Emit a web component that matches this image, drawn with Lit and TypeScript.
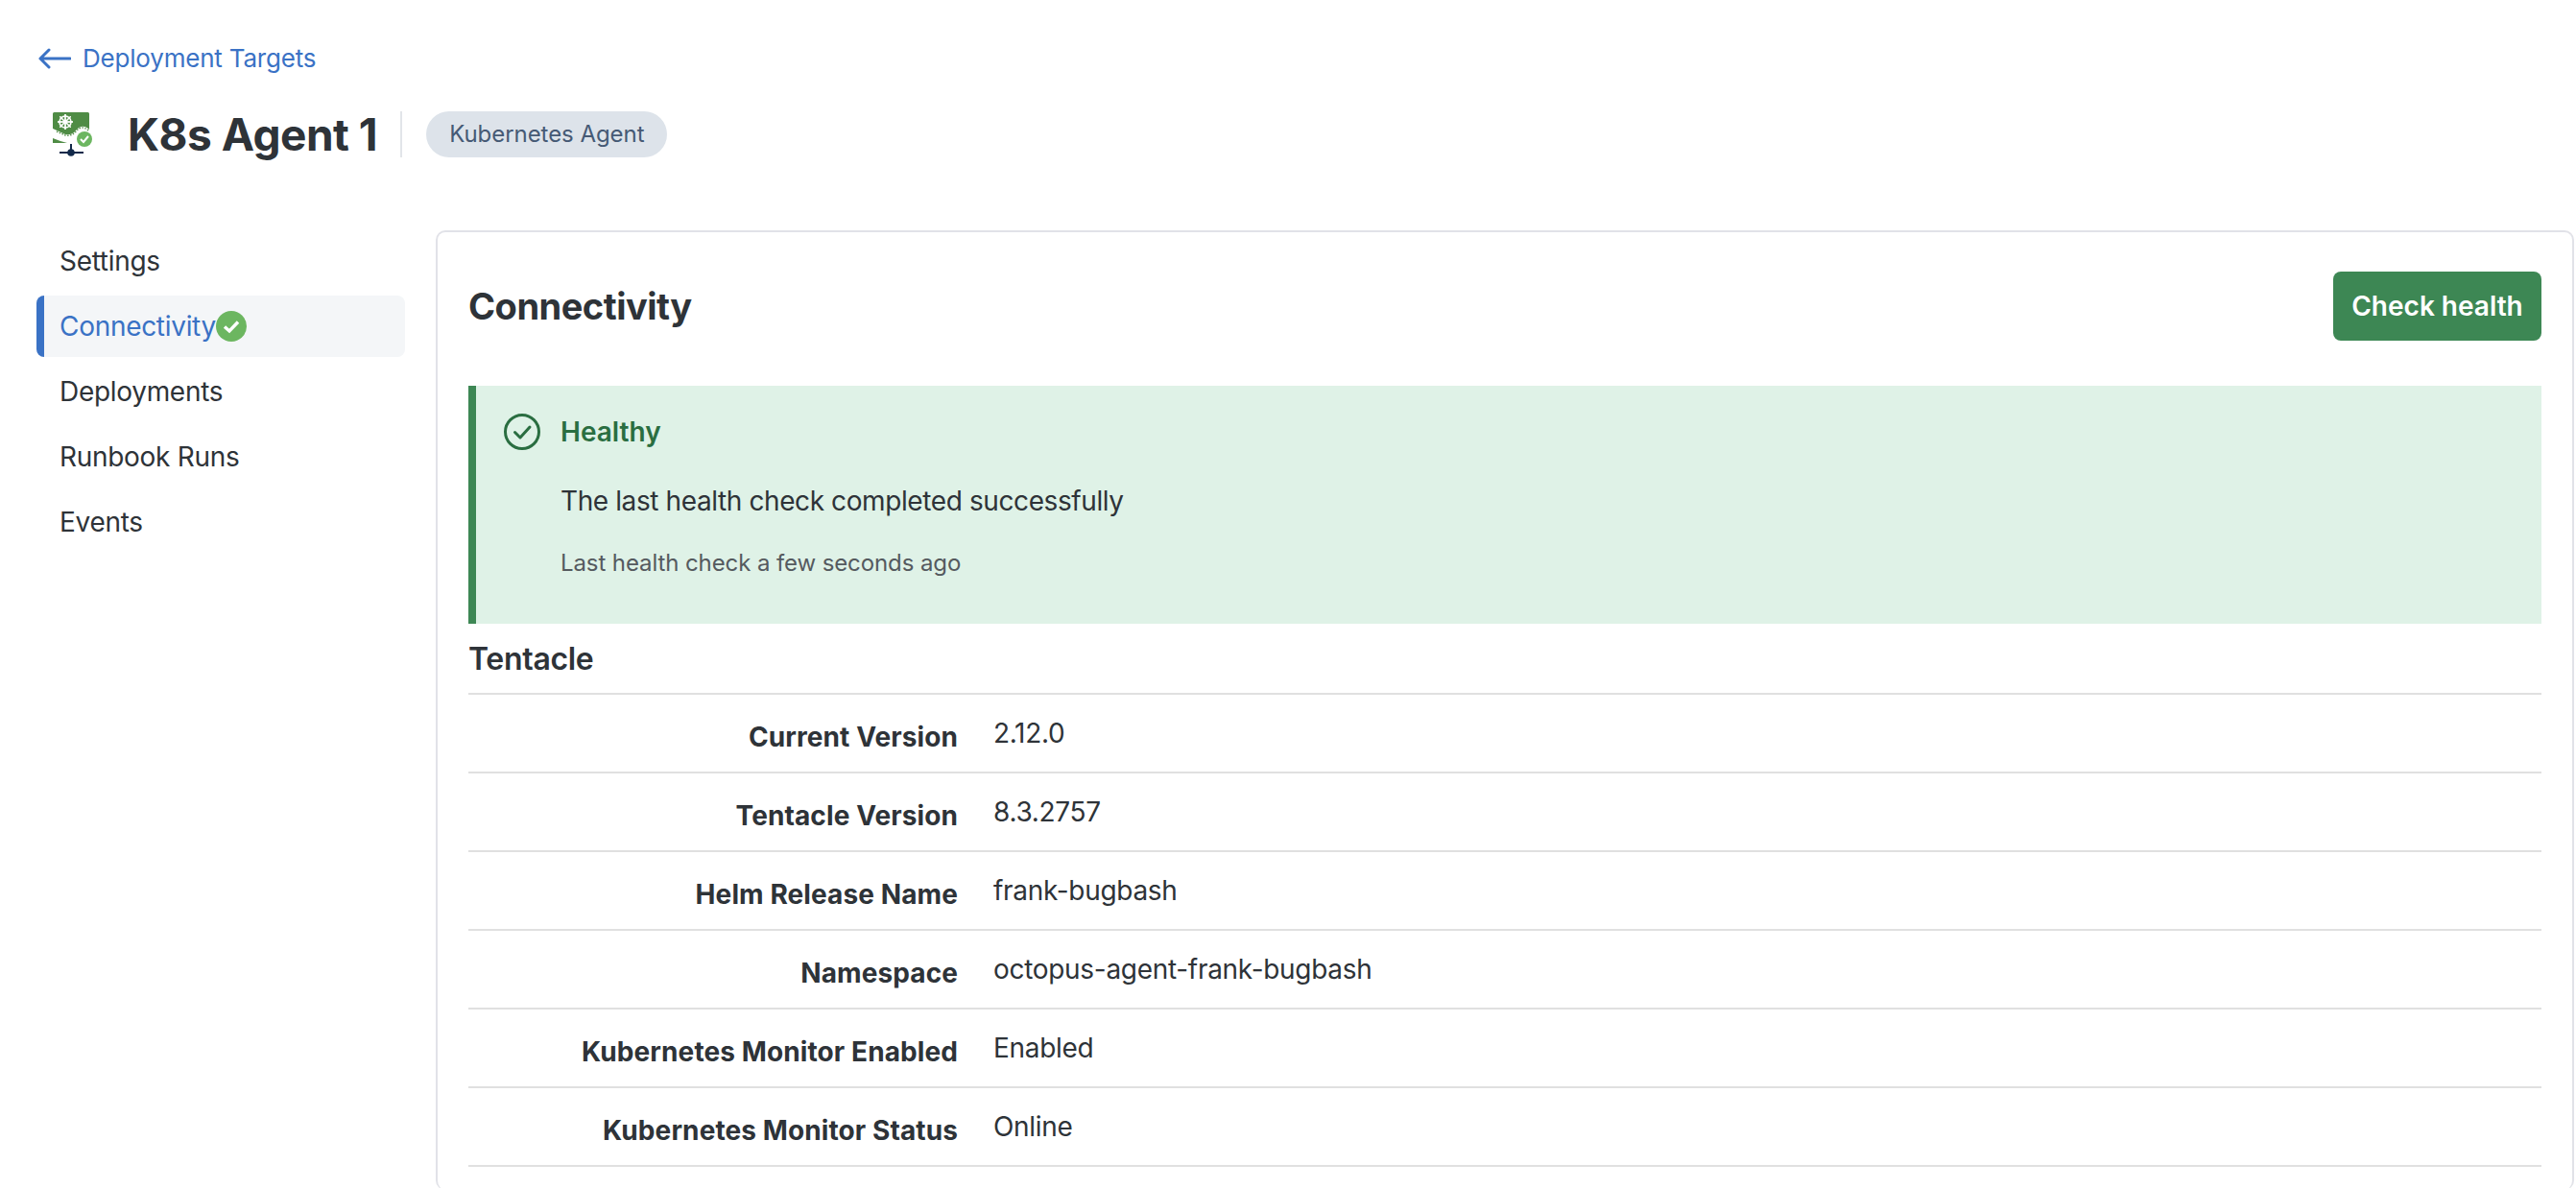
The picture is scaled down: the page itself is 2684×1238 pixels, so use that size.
import { LitElement, html, css, svg } from "lit";
import { customElement } from "lit/decorators.js";

const rows: [string, string][] = [
  ["Current Version", "2.12.0"],
  ["Tentacle Version", "8.3.2757"],
  ["Helm Release Name", "frank-bugbash"],
  ["Namespace", "octopus-agent-frank-bugbash"],
  ["Kubernetes Monitor Enabled", "Enabled"],
  ["Kubernetes Monitor Status", "Online"],
];

const spokes = [0, 45, 90, 135, 180, 225, 270, 315].map(
  (a) => svg`<line x1="68" y1="119" x2="68" y2="135" stroke="#fff" stroke-width="1.3" transform="rotate(${a} 68 127)"/>`
);

@customElement("app-root")
export class AppRoot extends LitElement {
  static styles = css`
    :host {
      display: block;
      height: 100vh;
      overflow: hidden;
      background: #fff;
      font-family: Inter, "Liberation Sans", sans-serif;
      color: #2e3338;
      font-size: 28px;
    }
    .head { padding: 45px 0 0 40px; height: 240px; box-sizing: border-box; }
    .back { display: flex; align-items: center; gap: 12px; height: 32px; color: #3a72c5; font-size: 26px; line-height: 32px; letter-spacing: -0.2px; }
    .back svg { display: block; }
    .title { display: flex; align-items: center; margin-top: 31px; margin-left: 12px; height: 64px; }
    .logo { display: block; width: 48px; height: 50px; flex: none; }
    .title h1 { margin: 0 0 0 33px; font-size: 46px; font-weight: 700; line-height: 64px; letter-spacing: -0.5px; }
    .sep { width: 2px; height: 48px; background: #e2e5e9; margin: 0 25px 0 24px; }
    .chip { height: 48px; padding: 0 24px; border-radius: 24px; background: #dde3ea; color: #465a75; font-size: 24px; line-height: 48px; letter-spacing: -0.05px; }
    .main { display: flex; align-items: flex-start; }
    .nav { width: 384px; margin-left: 38px; margin-right: 32px; flex: none; }
    .item { display: flex; align-items: center; height: 64px; margin-bottom: 4px; padding-left: 24px; box-sizing: border-box; font-size: 28px; letter-spacing: -0.3px; color: #2e3338; }
    .item.active { background: #f4f6f8; color: #3a72c5; border-radius: 8px; border-left: 8px solid #3a72c5; padding-left: 16px; }
    .item svg { display: block; }
    .card { flex: 1; border: 2px solid #e1e2e8; border-radius: 10px; border-bottom: 0; padding: 0 32px; margin-right: 2px; box-sizing: border-box; min-height: 1000px; }
    .card-head { display: flex; align-items: center; justify-content: space-between; height: 160px; padding-bottom: 6px; box-sizing: border-box; }
    .card-head h2 { margin: 0; font-size: 38px; font-weight: 700; line-height: 48px; letter-spacing: -0.5px; }
    .btn { width: 217px; height: 72px; border: 0; border-radius: 8px; background: #3d8754; color: #fff; font: 600 28px Inter, sans-serif; padding: 0; }
    .callout { height: 248px; background: #dff2e7; border-left: 8px solid #3d8754; box-sizing: border-box; padding: 28px 0 0 28px; display: grid; grid-template-columns: 40px 1fr; column-gap: 20px; align-content: start; }
    .callout svg { display: block; }
    .callout .t { font-weight: 600; color: #2a6e41; line-height: 40px; font-size: 28px; }
    .callout .m { grid-column: 2; margin-top: 32px; line-height: 40px; font-size: 28px; letter-spacing: -0.4px; color: #2e3338; }
    .callout .s { grid-column: 2; margin-top: 29px; line-height: 32px; font-size: 24px; letter-spacing: -0.1px; color: #555a5f; }
    h3 { margin: 0; font-size: 32px; font-weight: 600; line-height: 74px; height: 74px; letter-spacing: -0.3px; border-bottom: 2px solid #e0e0e0; box-sizing: border-box; }
    .row { display: grid; grid-template-columns: 510px 1fr; column-gap: 37px; height: 82px; border-bottom: 2px solid #e0e0e0; box-sizing: border-box; }
    .row .l { font-weight: 700; text-align: right; line-height: 36px; padding-top: 26px; letter-spacing: 0.1px; }
    .row .v { line-height: 36px; padding-top: 22px; letter-spacing: -0.3px; }
  `;

  render() {
    return html`
      <div class="head">
        <div class="back">
          <svg width="34" height="24" viewBox="0 0 34 24" fill="none" stroke="#3a72c5" stroke-width="3" stroke-linecap="round" stroke-linejoin="round"><path d="M2 12H33M11 3L2 12L11 21"/></svg>
          <span>Deployment Targets</span>
        </div>
        <div class="title">
          <svg class="logo" viewBox="52 115 48 50">
            <path d="M55 118.5Q55 117 56.5 117H91.5Q93 117 93 118.5V135C88 130 83 131 79 136C76 140 72 141 68 140L55 134Z" fill="#4f8c45"/>
            <path d="M59 137L68 141C73 142 77 140 80 136C83 132 88 132 92 136" fill="none" stroke="#4f8c45" stroke-width="1.4" stroke-dasharray="1.4 1.6"/>
            <path d="M55 144Q62 147 70 149H55Z" fill="#4f8c45"/>
            <circle cx="68" cy="127" r="6" fill="none" stroke="#fff" stroke-width="1.6"/>
            ${spokes}
            <circle cx="68" cy="127" r="2" fill="#fff"/>
            <circle cx="88" cy="145" r="8" fill="#6cb660"/>
            <path d="M84 145L87 148L92 142" fill="none" stroke="#fff" stroke-width="2"/>
            <path d="M74 150V159M62 159H87" stroke="#12294a" stroke-width="2" fill="none"/>
            <circle cx="74" cy="159" r="3.8" fill="#12294a"/>
          </svg>
          <h1>K8s Agent 1</h1>
          <div class="sep"></div>
          <div class="chip">Kubernetes Agent</div>
        </div>
      </div>
      <div class="main">
        <div class="nav">
          <div class="item">Settings</div>
          <div class="item active">Connectivity
            <svg width="32" height="32" viewBox="0 0 32 32"><circle cx="16" cy="16" r="16" fill="#6cb660"/><path d="M9 16.5L14 21L23 11.5" fill="none" stroke="#fff" stroke-width="3.4"/></svg>
          </div>
          <div class="item">Deployments</div>
          <div class="item">Runbook Runs</div>
          <div class="item">Events</div>
        </div>
        <div class="card">
          <div class="card-head">
            <h2>Connectivity</h2>
            <button class="btn">Check health</button>
          </div>
          <div class="callout">
            <svg width="40" height="40" viewBox="0 0 40 40" fill="none" stroke="#2a6e41" stroke-width="3"><circle cx="20" cy="20" r="17.5"/><path d="M12.5 20.5L18 26L28 15" stroke-linecap="round" stroke-linejoin="round"/></svg>
            <div class="t">Healthy</div>
            <div class="m">The last health check completed successfully</div>
            <div class="s">Last health check a few seconds ago</div>
          </div>
          <h3>Tentacle</h3>
          ${rows.map(([l, v]) => html`<div class="row"><div class="l">${l}</div><div class="v">${v}</div></div>`)}
        </div>
      </div>
    `;
  }
}
